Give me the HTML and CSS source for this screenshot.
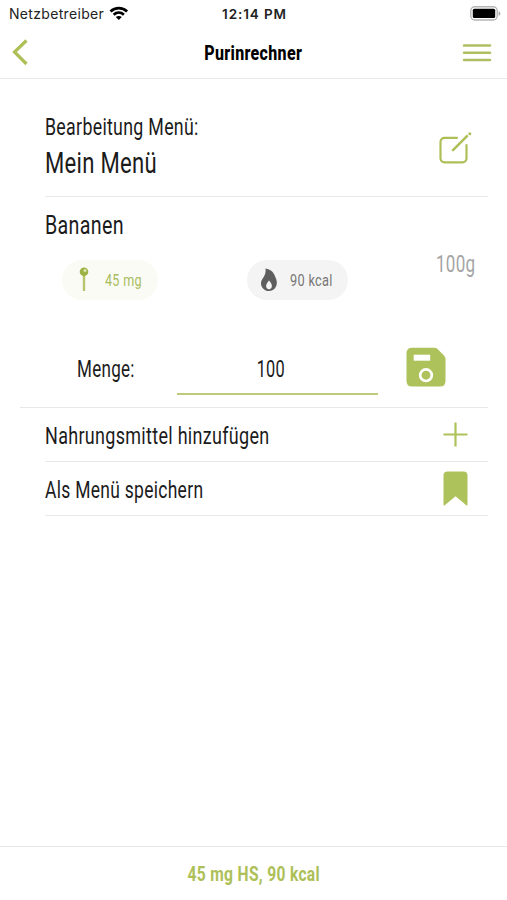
FILE: index.html
```html
<!DOCTYPE html>
<html lang="de">
<head>
<meta charset="utf-8">
<title>Purinrechner</title>
<link rel="stylesheet" href="styles.css">
</head>
<body>
<div class="app">
  <div class="status">
    <div class="carrier"><span>Netzbetreiber</span>
      <svg width="20" height="15" viewBox="0 0 20 15" fill="none" stroke="#000" stroke-width="2.7"><path d="M1.5 5.4C6.3.9 13.3.9 18.1 5.4M4.7 8.7c3-2.8 7.2-2.8 10.2 0"/><path d="M9.8 14 6.8 11.1c1.7-1.6 4.3-1.6 6 0z" fill="#000" stroke="none"/></svg>
    </div>
    <span class="clock">12:14 PM</span>
    <svg class="battery" width="31" height="15" viewBox="0 0 31 15"><rect x=".8" y=".8" width="26.4" height="13.2" rx="4" fill="#fff" stroke="#b5b5b5" stroke-width="1.4"/><rect x="2.8" y="2.8" width="22.4" height="9.2" rx="1.5" fill="#000"/><path d="M28.6 5.2c2.4.8 2.4 3.8 0 4.6z" fill="#aaa"/></svg>
  </div>
  <header class="nav">
    <svg class="back" width="18" height="28" viewBox="0 0 18 28" fill="none" stroke="#adc057" stroke-width="3.2"><path d="M15.5 1.5 3.5 13l12 12"/></svg>
    <h1 class="t title">Purinrechner</h1>
    <svg width="30" height="20" viewBox="0 0 30 20" stroke="#b0bf62" stroke-width="2.5" stroke-linecap="round"><path d="M2 2.5h26M2 9.8h26M2 17h26"/></svg>
  </header>
  <main>
    <section class="menu row">
      <div class="names"><span class="t edit">Bearbeitung Menü:</span><span class="t name">Mein Menü</span></div>
      <svg class="pencil" width="34" height="34" viewBox="0 0 34 34" fill="none" stroke="#adc057" stroke-width="2.2" stroke-linecap="round"><path d="M19 5.8H6.5a4 4 0 0 0-4 4v16.5a4 4 0 0 0 4 4H24.500a4 4 0 0 0 4-4V13"/><path d="M15 18.200 29 4.200" stroke-width="2.500"/><circle cx="31.800" cy="1.700" r="1.500" fill="#adc057" stroke="none"/></svg>
    </section>
    <section class="food">
      <div class="info">
        <span class="t foodname">Bananen</span>
        <div class="chips">
          <div class="chip purin"><svg width="10" height="26" viewBox="0 0 10 26"><path d="M5 6v18" stroke="#b5c66d" stroke-width="2.4"/><circle cx="5" cy="4.8" r="4.3" fill="#9db344"/><circle cx="6" cy="3.6" r="1.5" fill="#dce6b5"/></svg><span class="t mg">45 mg</span></div>
          <div class="chip energy"><svg width="18" height="24" viewBox="0 0 18 24"><path d="M5.5.6C11.5 1.5 14 5 15.200 8.800c1.200 2.500 1.800 4.500 1.600 6.700-.4 4.500-3.600 7.500-7.900 7.500S1 19.700 1 15.200c0-4.700 5.700-7 4.500-14.600z" fill="#5e5e5e"/><path d="M9 12.600c2 2.100 2.900 3.800 2.900 5.400 0 2-1.100 3.200-2.900 3.200S6.100 20 6.100 18c0-1.600 1.100-3.300 2.900-5.400z" fill="#f4f4f4"/></svg><span class="t kcal">90 kcal</span></div>
        </div>
      </div>
      <span class="t amount">100g</span>
    </section>
    <section class="quantity">
      <label class="t qlabel">Menge:</label>
      <div class="field"><span class="t qvalue">100</span></div>
      <svg class="save" width="40" height="40" viewBox="0 0 40 40"><path d="M6 .8h22.500q1.800 0 3 1.200l6.500 6.500q1.500 1.500 1.500 3.500V34q0 5.500-5.500 5.500H6Q.5 39.500.5 34V6.300Q.5.800 6 .8z" fill="#adc25a"/><path d="M7.700 7.700h16.500v6H7.700z" fill="#fff"/><circle cx="20" cy="28.200" r="5.800" fill="none" stroke="#fff" stroke-width="2.700"/></svg>
    </section>
    <section class="row action">
      <span class="t add">Nahrungsmittel hinzufügen</span>
      <svg width="25" height="25" viewBox="0 0 25 25" stroke="#adc25a" stroke-width="2.200"><path d="M12.500.5v24M.5 12.500h24"/></svg>
    </section>
    <section class="row action">
      <span class="t store">Als Menü speichern</span>
      <svg width="25" height="35" viewBox="0 0 25 35"><path d="M4.500.5h16q4 0 4 4v28.800q0 2-1.500.6L12.500 25.200 2 33.900q-1.500 1.400-1.500-.6V4.500q0-4 4-4z" fill="#adc25a"/></svg>
    </section>
  </main>
  <footer class="total"><span class="t sum">45 mg HS, 90 kcal</span></footer>
</div>
</body>
</html>
```
FILE: styles.css
```css
* { box-sizing: border-box; }
body { margin: 0; background: #fff; color: #1b1b1b; font-family: Roboto, "Liberation Sans", sans-serif; }
svg { display: block; flex: none; }
.app { width: 507px; height: 900px; display: flex; flex-direction: column; overflow: hidden; }
.t { display: inline-block; white-space: nowrap; transform-origin: left center; letter-spacing: .4px; }
.status { height: 27px; display: grid; grid-template-columns: 1fr auto 1fr; align-items: center; padding: 0 6px 0 9px; font-family: Inter, sans-serif; font-size: 14px; color: #222; }
.carrier { display: flex; align-items: center; gap: 5px; letter-spacing: .32px; }
.clock { font-weight: 600; font-size: 13.5px; letter-spacing: .9px; margin-right: 1px; }
.battery { justify-self: end; }
.nav { height: 52px; border-bottom: 1px solid #e9e9e9; display: grid; grid-template-columns: 1fr auto 1fr; align-items: center; padding: 0 15px 0 11px; }
.nav svg:last-child { justify-self: end; }
.title { margin: 0 0 0 4px; font-size: 20px; line-height: 24px; font-weight: 800; color: #000; transform: scaleX(.8); transform-origin: center; }
main { flex: 1; }
.row { margin: 0 19px 0 45px; border-bottom: 1px solid #e8e8e8; display: flex; justify-content: space-between; align-items: center; }
.menu { height: 118px; padding: 14px 16px 0 0; }
.pencil { margin-top: 8px; }
.names { display: flex; flex-direction: column; }
.edit { font-size: 23.5px; line-height: 36px; transform: scaleX(.756); }
.name { font-size: 30px; line-height: 36px; transform: scaleX(.736); }
.food { height: 137px; display: flex; justify-content: space-between; padding: 10px 0 0 45px; }
.info { width: 320px; }
.foodname { font-size: 26px; line-height: 36px; transform: scaleX(.757); }
.chips { display: flex; justify-content: space-between; padding: 17px 17px 0; }
.chip { height: 40px; border-radius: 20px; display: flex; align-items: center; font-size: 17px; }
.purin { width: 96px; background: #fafbf5; color: #a9bd60; padding-left: 17px; gap: 16px; }
.energy { width: 101px; background: #f4f4f4; color: #777; padding-left: 13px; gap: 12px; }
.mg { transform: scaleX(.74); }
.kcal { transform: scaleX(.75); }
.amount { width: 71px; margin-top: 40px; font-size: 23px; line-height: 36px; color: #a5a5a5; transform: scaleX(.74); }
.quantity { height: 74px; margin: 0 19px 0 20px; padding: 0 42px 0 57px; border-bottom: 1px solid #e8e8e8; display: flex; }
.qlabel { width: 100px; font-size: 24px; line-height: 71px; transform: scaleX(.71); }
.field { width: 201px; height: 61px; border-bottom: 2px solid #bdcb7c; text-align: center; padding-right: 14px; }
.qvalue { font-size: 24px; line-height: 70px; transform: scaleX(.68); transform-origin: center; }
.save { margin: 13px 0 0 auto; }
.action { height: 54px; padding-right: 20px; }
.action .t { font-size: 23.5px; line-height: 30px; margin-top: 2px; }
.add { transform: scaleX(.765); }
.store { transform: scaleX(.743); }
.total { height: 54px; border-top: 1px solid #e8e8e8; display: flex; justify-content: center; align-items: center; padding-top: 2px; }
.sum { font-size: 19.5px; font-weight: 700; color: #adc057; transform: scaleX(.8); transform-origin: center; }
```
